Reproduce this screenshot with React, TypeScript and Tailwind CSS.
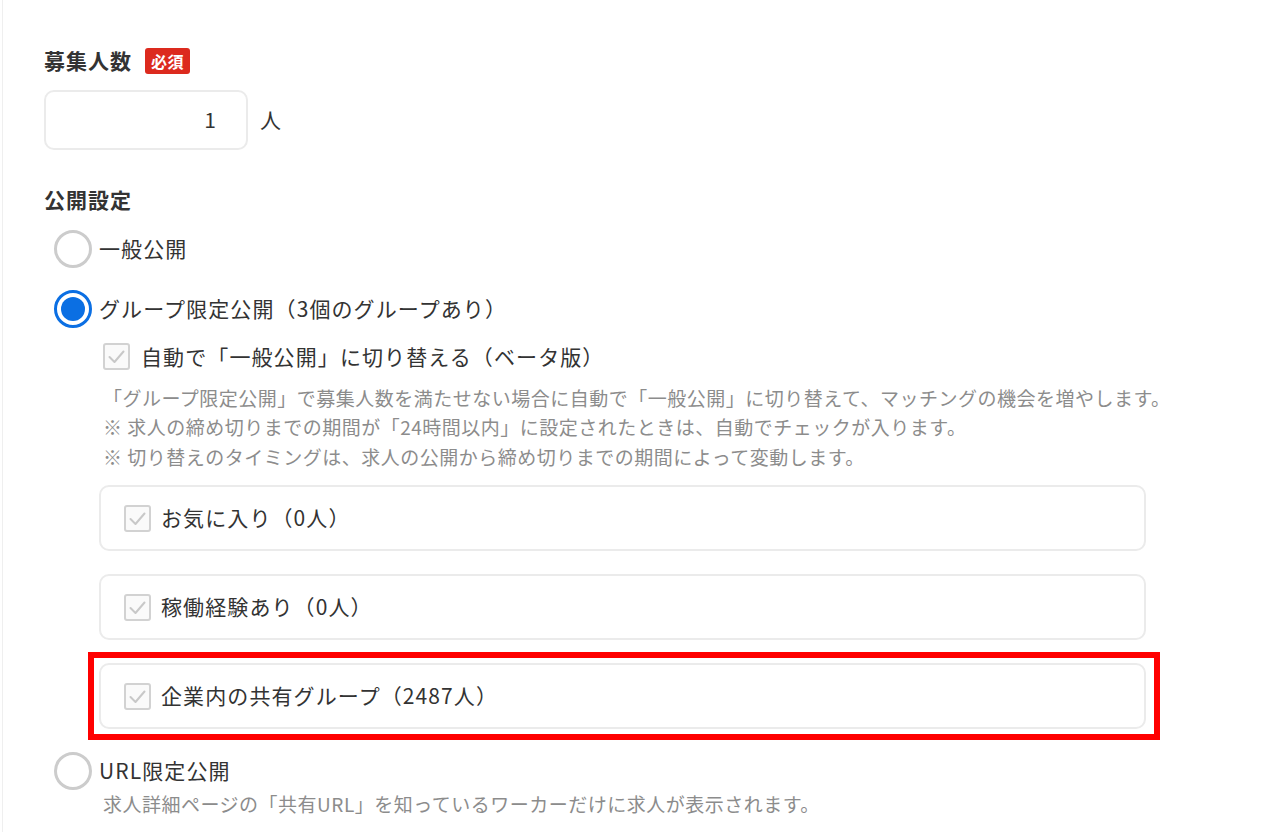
import React from "react";

const font = { fontFamily: '"Noto Sans CJK JP", "Noto Sans", sans-serif' };

const CheckBox = () => (
  <span className="flex h-[27px] w-[27px] shrink-0 items-center justify-center rounded-[3px] border-2 border-[#d2d2d2] bg-[#fafafa]">
    <svg width="21" height="21" viewBox="0 0 21 21" fill="none">
      <path d="M3.5 11 L8.5 16 L17.5 5.5" stroke="#c8c8c8" strokeWidth="2" strokeLinecap="round" strokeLinejoin="round" />
    </svg>
  </span>
);

const Radio = ({ checked }: { checked?: boolean }) =>
  checked ? (
    <span className="flex h-[38px] w-[38px] shrink-0 items-center justify-center rounded-full border-[3px] border-[#0b6fe3] bg-white">
      <span className="h-[24px] w-[24px] rounded-full bg-[#0b6fe3]" />
    </span>
  ) : (
    <span className="h-[38px] w-[38px] shrink-0 rounded-full border-[3px] border-[#cccccc] bg-white" />
  );

const GroupCard = ({ label }: { label: string }) => (
  <div className="flex h-[66px] items-center gap-[10px] rounded-[10px] border-2 border-[#ebebeb] bg-white pl-[23px]">
    <CheckBox />
    <span className="text-[21px] tracking-[1.1px] text-[#333]">{label}</span>
  </div>
);

export default function App() {
  return (
    <div className="min-h-[832px] bg-white pl-[2px]" style={font}>
      <div className="min-h-[832px] border-l border-[#efefef] pl-[41px] pt-[48px] text-[#333]">
        {/* 募集人数 */}
        <div className="flex h-[26px] items-center gap-[13px]">
          <h2 className="text-[21px] font-bold tracking-[1px] text-[#333]">募集人数</h2>
          <span className="flex h-[26px] items-center rounded-[3px] bg-[#dc2a1e] px-[6px] text-[16px] font-bold tracking-[0.5px] text-white">
            必須
          </span>
        </div>
        <div className="mt-[16px] flex items-center gap-[12px]">
          <div className="flex h-[60px] w-[204px] items-center justify-end rounded-[10px] border-2 border-[#ebebeb] pr-[30px] text-[21px]">
            1
          </div>
          <span className="text-[21px]">人</span>
        </div>

        {/* 公開設定 */}
        <h2 className="mt-[37px] flex h-[26px] items-center text-[21px] font-bold tracking-[1px]">公開設定</h2>

        <div className="ml-[10px] mt-[17px] flex items-center gap-[7px]">
          <Radio />
          <span className="text-[21px] tracking-[1.1px]">一般公開</span>
        </div>

        <div className="ml-[10px] mt-[22px] flex items-center gap-[7px]">
          <Radio checked />
          <span className="text-[21px] tracking-[1.1px]">グループ限定公開（3個のグループあり）</span>
        </div>

        <div className="ml-[55px] w-[1047px]">
          <div className="mt-[13px] flex items-center gap-[11px] pl-[4px]">
            <CheckBox />
            <span className="text-[21px] tracking-[1.1px]">自動で「一般公開」に切り替える（ベータ版）</span>
          </div>
          <div className="mt-[10px] whitespace-nowrap pl-[4px] text-[19px] leading-[29.5px] tracking-[0.5px] text-[#8c8c8c]">
            <p>「グループ限定公開」で募集人数を満たせない場合に自動で「一般公開」に切り替えて、マッチングの機会を増やします。</p>
            <p>※ 求人の締め切りまでの期間が「24時間以内」に設定されたときは、自動でチェックが入ります。</p>
            <p>※ 切り替えのタイミングは、求人の公開から締め切りまでの期間によって変動します。</p>
          </div>

          <div className="mt-[14px] flex flex-col gap-[23px]">
            <GroupCard label="お気に入り（0人）" />
            <GroupCard label="稼働経験あり（0人）" />
            <div className="relative">
              <GroupCard label="企業内の共有グループ（2487人）" />
              <span className="pointer-events-none absolute -bottom-[11px] -left-[11px] -right-[14px] -top-[11px] border-[6px] border-[#ff0000]" />
            </div>
          </div>
        </div>

        <div className="ml-[10px] mt-[23px] flex items-center gap-[7px]">
          <Radio />
          <span className="text-[21px] tracking-[1.1px]">URL限定公開</span>
        </div>
        <p className="ml-[59px] mt-[1px] text-[19px] leading-[26px] tracking-[0.5px] text-[#8c8c8c]">
          求人詳細ページの「共有URL」を知っているワーカーだけに求人が表示されます。
        </p>
      </div>
    </div>
  );
}
